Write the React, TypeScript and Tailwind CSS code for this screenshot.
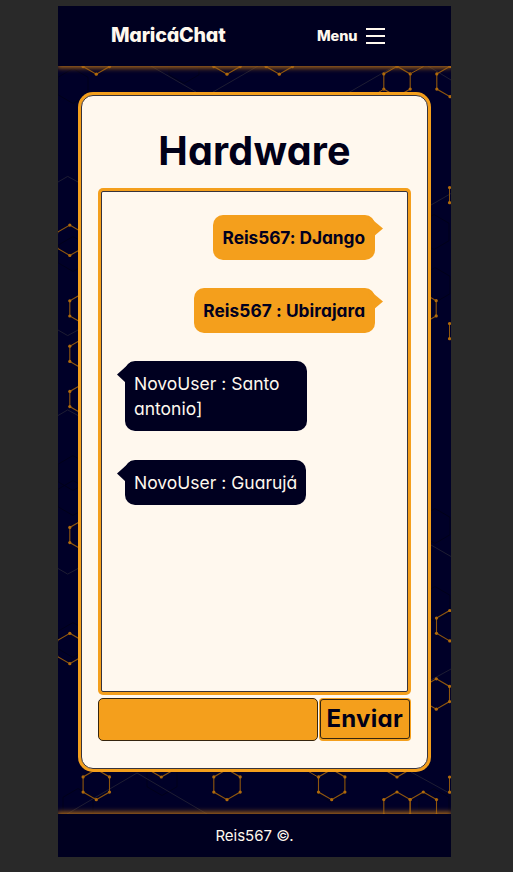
import type { ReactNode } from "react";

const R = 15.2;
const H = 13.2;

function hexPoints(cx: number, cy: number, r: number, h: number) {
  return [
    [cx, cy - r],
    [cx + h, cy - r / 2],
    [cx + h, cy + r / 2],
    [cx, cy + r],
    [cx - h, cy + r / 2],
    [cx - h, cy - r / 2],
  ];
}

function Hex({ x, y }: { x: number; y: number }) {
  const pts = hexPoints(x, y, R, H);
  return (
    <g>
      <polygon points={pts.map((p) => p.join(",")).join(" ")} fill="none" stroke="#8f560d" strokeWidth="1.1" />
      {pts.map(([px, py]) => (
        <circle key={`${px}-${py}`} cx={px} cy={py} r="1.6" fill="#b06a0b" />
      ))}
    </g>
  );
}

function Edge({ x, y }: { x: number; y: number }) {
  return (
    <g>
      <path d={`M${x} ${y}v15.2`} stroke="#8f560d" />
      <circle cx={x} cy={y} r="1.6" fill="#b06a0b" />
      <circle cx={x} cy={y + 15.2} r="1.6" fill="#b06a0b" />
    </g>
  );
}

const hexes = [
  [38.3, 53], [169, 53], [221.3, 53], [339, 75.5], [392, 75.5],
  [11.8, 234.3], [25, 302.4], [25, 347.8], [25, 393], [25, 529], [11.8, 642.5],
  [365, 302.3], [391.7, 619.7], [378.3, 688],
  [38.3, 778.5], [169, 778.5], [273.7, 778.5], [103.3, 755.8], [339, 755.8],
  [339, 801.2], [365.3, 801.2],
];

const darkHexes = [
  [15, 80], [15, 248], [15, 467], [15, 492], [15, 634], [376, 226], [377, 279],
  [377, 520], [377, 598], [20, 800], [104, 772], [272, 778], [376, 800], [126, 60],
];

function Pattern() {
  return (
    <svg className="absolute inset-0 h-full w-full" viewBox="0 0 393 851" fill="none">
      {darkHexes.map(([x, y]) => (
        <polygon key={`${x}-${y}`} points={hexPoints(x, y, 17.5, 15).map((p) => p.join(",")).join(" ")} stroke="#00001a" />
      ))}
      <g stroke="#1e1d33" strokeWidth="1">
        <path d="M0 176l9.700-5.600 10.300 5.600M0 324l9.700 5.600 10.300-5.600M0 409.500l9.700-5.600 10.300 5.600M0 562.500l9.700 5.600 10.300-5.600" />
        <path d="M93 60l45 26M155 86l45-26M290 87l52-30M370 60l23 14M373 199l20-11.500M373 539l20 11.500M373 674l20-11M9 808l70-41 70 41M353 766l40 22" />
      </g>
      {hexes.map(([x, y]) => (
        <Hex key={`${x}-${y}`} x={x} y={y} />
      ))}
      <Edge x={391.5} y={181.5} />
      <Edge x={391.5} y={317.5} />
      <Edge x={391.5} y={771} />
      <path d="M352 68l13.500-7.500M326 83l-8 5M260 771l-12-7" stroke="#8f560d" />
    </svg>
  );
}

function Sent({ children, className }: { children: ReactNode; className: string }) {
  return (
    <div className={`relative flex h-[45px] items-center justify-center self-end rounded-[10px] bg-[#f49f1c] text-[17.3px] font-bold text-[#000020] ${className}`}>
      <svg className="absolute top-0 -right-[8px]" width="18" height="22" viewBox="0 0 18 22">
        <path d="M3 1L18 13.500L8 22Z" fill="#f49f1c" />
      </svg>
      <span className="relative top-[0.5px] whitespace-nowrap">{children}</span>
    </div>
  );
}

function Received({ children, className }: { children: ReactNode; className: string }) {
  return (
    <div className={`relative flex items-center self-start rounded-[10px] bg-[#000020] px-[9.500px] text-[17.500px] leading-[25px] text-[#fff8ee] ${className}`}>
      <svg className="absolute top-0 -left-[8px]" width="18" height="22" viewBox="0 0 18 22">
        <path d="M14 1L0 13.500L9 22Z" fill="#000020" />
      </svg>
      <span className="relative whitespace-nowrap">{children}</span>
    </div>
  );
}

export default function App() {
  return (
    <div className="flex h-[872px] w-[513px] items-start bg-[#292929] pt-[6px] pl-[58px] font-['Inter','Open_Sans',sans-serif] [font-feature-settings:'cv11','calt'_0]">
      <div className="relative flex h-[851px] w-[393px] flex-col overflow-hidden bg-[#000028]">
        <Pattern />
        <header className="relative flex h-[60px] shrink-0 items-center bg-[#000020] pl-[53px] text-[#fff8ee] shadow-[0_1px_5px_1px_#a76617]">
          <span className="w-[206px] text-[19.700px] font-extrabold tracking-[-0.2px]">MaricáChat</span>
          <span className="w-[49px] text-[14.500px] font-extrabold tracking-[-0.1px]">Menu</span>
          <span className="flex flex-col gap-[5px]">
            <i className="h-[1.5px] w-[19px] bg-[#fff8ee]" />
            <i className="h-[2px] w-[19px] bg-[#fff8ee]" />
            <i className="h-[2px] w-[19px] bg-[#fff8ee]" />
          </span>
        </header>
        <main className="relative mt-[25.500px] ml-[20px] h-[680px] w-[353px] rounded-[15px] bg-[#f49f1c] p-[3px]">
          <div className="flex h-full flex-col rounded-[12px] border border-[#38333a] bg-[#fff8ee] px-[16px]">
            <h1 className="mt-[27.500px] h-[65px] text-center text-[39.500px] leading-[56px] font-bold tracking-[0.2px] text-[#000018]">Hardware</h1>
            <section className="h-[506.500px] w-[313px] rounded-[5px] bg-[#f49f1c] p-[3px]">
              <div className="flex h-full flex-col gap-[28.200px] rounded-[2px] border border-[#38333a] bg-[#fff8ee] pt-[22.500px] pr-[32px] pl-[22.500px]">
                <Sent className="w-[162.5px] tracking-[-0.05px]">Reis567: DJango</Sent>
                <Sent className="w-[181.5px] tracking-[0.05px]">Reis567 : Ubirajara</Sent>
                <Received className="h-[70.500px] w-[182.500px]">
                  NovoUser : Santo
                  <br />
                  antonio]
                </Received>
                <Received className="h-[45px] w-[181.500px]">NovoUser : Guarujá</Received>
              </div>
            </section>
            <form className="mt-[3px] flex h-[43.500px] w-[313px]">
              <input className="h-[43.500px] w-[219.500px] rounded-[5px] border border-[#35250f] bg-[#f49f1c]" />
              <button type="button" className="ml-px h-[43px] w-[92.500px] rounded-[4px] bg-[#f49f1c] p-[1.500px]">
                <span className="flex h-full items-center justify-center rounded-[3px] border border-[#35250f] text-[24px] font-bold tracking-[0.3px] text-[#000018]">Enviar</span>
              </button>
            </form>
          </div>
        </main>
        <footer className="absolute inset-x-0 bottom-0 flex h-[43px] items-center justify-center bg-[#000020] pt-[2px] text-[15px] text-[#fff8ee] shadow-[0_-1px_5px_1px_#a76617]">
          Reis567 ©.
        </footer>
      </div>
    </div>
  );
}
